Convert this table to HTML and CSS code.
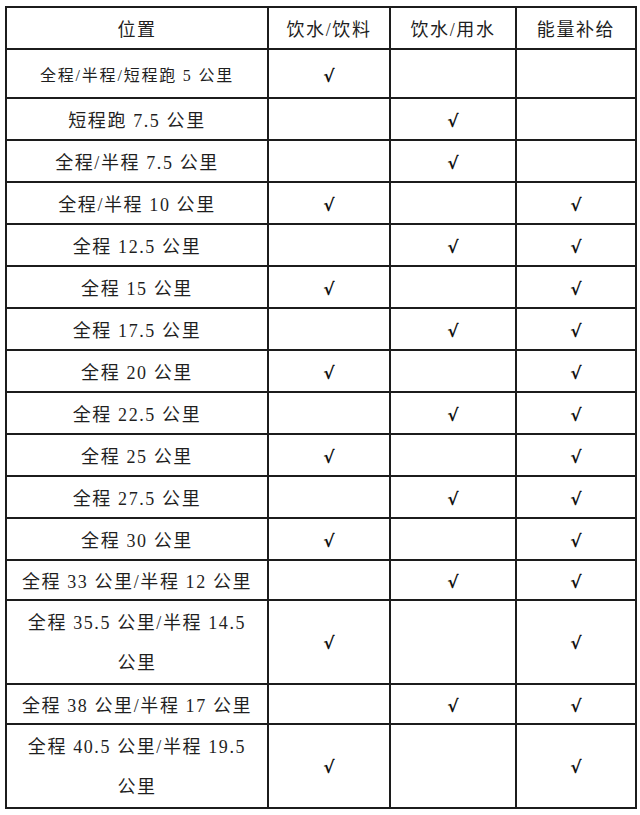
FILE: index.html
```html
<!DOCTYPE html>
<html lang="zh-CN">
<head>
<meta charset="utf-8">
<title>补给站位置</title>
<link rel="stylesheet" href="styles.css">
</head>
<body>
<table class="supply">
  <colgroup>
    <col class="c-pos">
    <col class="c-drink">
    <col class="c-water">
    <col class="c-energy">
  </colgroup>
  <thead>
    <tr><th>位置</th><th>饮水/饮料</th><th>饮水/用水</th><th>能量补给</th></tr>
  </thead>
  <tbody>
    <tr class="first"><td class="small">全程/半程/短程跑 5 公里</td><td class="chk">√</td><td></td><td></td></tr>
    <tr><td>短程跑 7.5 公里</td><td></td><td class="chk">√</td><td></td></tr>
    <tr><td>全程/半程 7.5 公里</td><td></td><td class="chk">√</td><td></td></tr>
    <tr><td>全程/半程 10 公里</td><td class="chk">√</td><td></td><td class="chk">√</td></tr>
    <tr><td>全程 12.5 公里</td><td></td><td class="chk">√</td><td class="chk">√</td></tr>
    <tr><td>全程 15 公里</td><td class="chk">√</td><td></td><td class="chk">√</td></tr>
    <tr><td>全程 17.5 公里</td><td></td><td class="chk">√</td><td class="chk">√</td></tr>
    <tr><td>全程 20 公里</td><td class="chk">√</td><td></td><td class="chk">√</td></tr>
    <tr><td>全程 22.5 公里</td><td></td><td class="chk">√</td><td class="chk">√</td></tr>
    <tr><td>全程 25 公里</td><td class="chk">√</td><td></td><td class="chk">√</td></tr>
    <tr><td>全程 27.5 公里</td><td></td><td class="chk">√</td><td class="chk">√</td></tr>
    <tr><td>全程 30 公里</td><td class="chk">√</td><td></td><td class="chk">√</td></tr>
    <tr class="tight"><td>全程 33 公里/半程 12 公里</td><td></td><td class="chk">√</td><td class="chk">√</td></tr>
    <tr class="double"><td>全程 35.5 公里/半程 14.5 公里</td><td class="chk">√</td><td></td><td class="chk">√</td></tr>
    <tr class="tight"><td>全程 38 公里/半程 17 公里</td><td></td><td class="chk">√</td><td class="chk">√</td></tr>
    <tr class="double"><td>全程 40.5 公里/半程 19.5 公里</td><td class="chk">√</td><td></td><td class="chk">√</td></tr>
  </tbody>
</table>
</body>
</html>
```

FILE: styles.css
```css
html, body {
  margin: 0;
  padding: 0;
  background: #ffffff;
}

body {
  padding: 6px 0 0 5px;
  font-family: "Liberation Serif", "Noto Sans CJK SC", serif;
  color: #1f1f1f;
}

.supply {
  border-collapse: collapse;
  table-layout: fixed;
  width: 630px;
}

.c-pos { width: 262px; }
.c-drink { width: 122px; }
.c-water { width: 126px; }
.c-energy { width: 120px; }

.supply th,
.supply td {
  border: 2px solid #1c1c1c;
  padding: 4px 8px 0;
  line-height: 36px;
  font-size: 18px;
  font-weight: normal;
  letter-spacing: 1.6px;
  text-align: center;
  vertical-align: middle;
  word-break: keep-all;
}

.supply tr.first td {
  padding-top: 5px;
  line-height: 42px;
}

.supply td.small {
  font-size: 16px;
  letter-spacing: 1.8px;
}

.supply tr.tight td {
  line-height: 34px;
}

.supply tr.double td {
  padding-top: 2px;
  line-height: 40px;
}

.supply td.chk {
  font-family: "DejaVu Sans", sans-serif;
  font-weight: bold;
  font-size: 17px;
  letter-spacing: 0;
  color: #111111;
}
```
